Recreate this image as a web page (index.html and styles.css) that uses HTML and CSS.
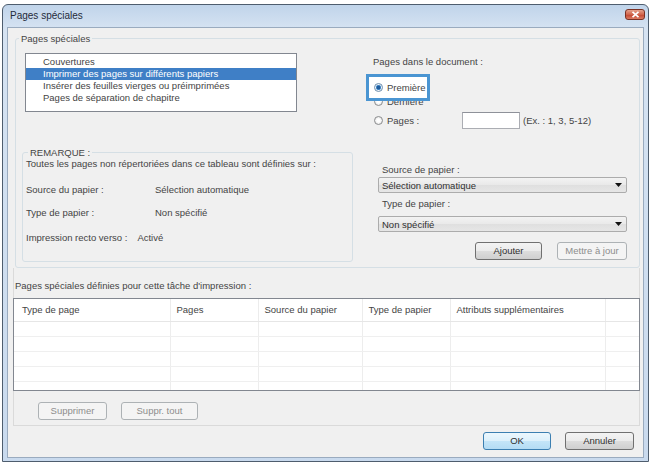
FILE: index.html
```html
<!DOCTYPE html>
<html lang="fr">
<head>
  <meta charset="UTF-8">
  <meta name="viewport" content="width=device-width, initial-scale=1.0">
  <title>Pages spéciales</title>
  <link rel="stylesheet" href="styles.css">
</head>
<body>

  <div class="window">
    <div class="titlebar">
      <span class="title">Pages spéciales</span>
      <span class="close">
        <svg width="9" height="7" viewBox="0 0 9 7"><path d="M1.5 0.8 L7.5 6.2 M7.5 0.8 L1.5 6.2" stroke="#fff" stroke-width="1.7"/></svg>
      </span>
    </div>

    <div class="client">
      <div class="group">
        <span class="group-title">Pages spéciales</span>

        <div class="group-top">
          <ul class="listbox">
            <li>Couvertures</li>
            <li class="selected">Imprimer des pages sur différents papiers</li>
            <li>Insérer des feuilles vierges ou préimprimées</li>
            <li>Pages de séparation de chapitre</li>
          </ul>

          <div class="doc-pages">
            <div class="doc-label">Pages dans le document :</div>
            <div class="focus-box"><span class="radio checked"></span>Première</div>
            <div class="radio-row last-row"><span class="radio"></span>Dernière</div>
            <div class="radio-row pages-row">
              <span class="radio"></span>
              <span class="pages-label">Pages :</span>
              <span class="textbox"></span>
              <span class="hint">(Ex. : 1, 3, 5-12)</span>
            </div>
          </div>
        </div>

        <div class="group-mid">
          <div class="note">
            <span class="group-title">REMARQUE :</span>
            <p class="note-intro">Toutes les pages non répertoriées dans ce tableau sont définies sur :</p>
            <div class="note-row"><span class="key">Source du papier :</span><span>Sélection automatique</span></div>
            <div class="note-row"><span class="key">Type de papier :</span><span>Non spécifié</span></div>
            <div class="note-row last-note"><span class="key key-auto">Impression recto verso :</span><span>Activé</span></div>
          </div>

          <div class="paper">
            <div class="paper-label">Source de papier :</div>
            <div class="combo">
              <span>Sélection automatique</span>
              <svg width="7" height="4" viewBox="0 0 7 4"><path d="M0 0 H7 L3.5 4 Z" fill="#111"/></svg>
            </div>
            <div class="paper-label second">Type de papier :</div>
            <div class="combo second">
              <span>Non spécifié</span>
              <svg width="7" height="4" viewBox="0 0 7 4"><path d="M0 0 H7 L3.5 4 Z" fill="#111"/></svg>
            </div>
            <div class="paper-actions">
              <span class="btn btn-add">Ajouter</span>
              <span class="btn btn-update disabled">Mettre à jour</span>
            </div>
          </div>
        </div>
      </div>

      <div class="defined">
        <div class="defined-title">Pages spéciales définies pour cette tâche d'impression :</div>
        <div class="table-wrap">
          <table class="pages-table">
            <colgroup>
              <col style="width:156px"><col style="width:88px"><col style="width:104px">
              <col style="width:88px"><col style="width:155px"><col style="width:34px">
            </colgroup>
            <tr><th>Type de page</th><th>Pages</th><th>Source du papier</th><th>Type de papier</th><th>Attributs supplémentaires</th><th></th></tr>
            <tr><td></td><td></td><td></td><td></td><td></td><td></td></tr>
            <tr><td></td><td></td><td></td><td></td><td></td><td></td></tr>
            <tr><td></td><td></td><td></td><td></td><td></td><td></td></tr>
            <tr><td></td><td></td><td></td><td></td><td></td><td></td></tr>
            <tr><td></td><td></td><td></td><td></td><td></td><td></td></tr>
          </table>
        </div>
        <div class="table-actions">
          <span class="btn disabled btn-del">Supprimer</span>
          <span class="btn disabled btn-delall">Suppr. tout</span>
        </div>
      </div>

      <div class="dialog-buttons">
        <span class="btn btn-default btn-ok">OK</span>
        <span class="btn btn-cancel">Annuler</span>
      </div>
    </div>
  </div>

</body>
</html>
```

FILE: styles.css
```css
* {
  box-sizing: border-box;
}
body {
  margin: 0;
  background-color: #fff;
  font-family: "Liberation Sans", Arial, sans-serif;
  font-size: 9.5px;
  color: #444;
}
p {
  margin: 0;
}

/* window frame */
.window {
  width: 647px;
  height: 458px;
  margin: 4px 0 0 2px;
  border: 1px solid #4e5d6e;
  border-radius: 6px 6px 0 0;
  background: linear-gradient(#c0d4ea, #d6e3f2 24px, #c9daee);
  display: flex;
  flex-direction: column;
}
.titlebar {
  height: 22px;
  flex-shrink: 0;
  display: flex;
  justify-content: space-between;
}
.title {
  padding-left: 7px;
  line-height: 22px;
  font-size: 10px;
  color: #1f2b3a;
}
.close {
  width: 20px;
  height: 11px;
  margin: 4px 3px 0 0;
  border: 1px solid #7a3124;
  border-radius: 3px;
  background: linear-gradient(#e6a28c, #d0644c 50%, #c2452f 51%, #dc7b62);
  display: flex;
  align-items: center;
  justify-content: center;
}
.client {
  height: 431px;
  margin: 0 4px 3px;
  border: 1px solid #9aabbf;
  background-color: #f0f0f0;
}

/* group boxes */
.group {
  width: 625px;
  height: 230px;
  margin: 10px 0 0 7px;
  border: 1px solid #d5dfe5;
  border-radius: 3px;
}
.group-title {
  display: block;
  width: max-content;
  margin: -6px 0 0 3px;
  padding: 0 2px;
  line-height: 11px;
  background-color: #f0f0f0;
}
.group-top {
  display: flex;
  height: 85px;
}
.listbox {
  list-style: none;
  width: 272px;
  height: 59px;
  margin: 9px 0 0 9px;
  padding: 2px 0 0;
  border: 1px solid #828790;
  background-color: #fff;
}
.listbox li {
  line-height: 12px;
  padding-left: 17px;
  white-space: nowrap;
}
.listbox .selected {
  background-color: #3f7fc6;
  color: #fff;
}

.doc-pages {
  margin-left: 69px;
}
.doc-label {
  margin-top: 12px;
  padding-left: 7px;
  line-height: 11px;
}
.focus-box {
  position: relative;
  z-index: 1;
  width: 64px;
  height: 27px;
  margin-top: 7px;
  padding-left: 5px;
  border: 3px solid #4a95d2;
  background-color: #fff;
  display: flex;
  align-items: center;
}
.radio-row {
  display: flex;
  align-items: center;
  padding-left: 8px;
  line-height: 11px;
}
.last-row {
  margin-top: -5px;
}
.pages-row {
  height: 17px;
  margin-top: 5px;
}
.radio {
  width: 9px;
  height: 9px;
  margin-right: 4px;
  flex-shrink: 0;
  border: 1px solid #8a8c8e;
  border-radius: 50%;
  background: radial-gradient(circle, #fff 30%, #d9d9d9);
}
.radio.checked {
  border-color: #6f8fae;
  background: radial-gradient(circle, #1e5b9c 0 1.6px, #5fa3dc 2.4px, #eef3f8 3px);
}
.pages-label {
  width: 75px;
}
.textbox {
  width: 58px;
  height: 17px;
  border: 1px solid #abadb3;
  border-top-color: #8e9199;
  background-color: #fff;
}
.hint {
  margin-left: 3px;
}

.group-mid {
  display: flex;
  margin-top: 23px;
}
.note {
  width: 331px;
  height: 110px;
  margin-left: 6px;
  border: 1px solid #d5dfe5;
  border-radius: 3px;
}
.note .group-title {
  margin-left: 5px;
}
.note-intro {
  padding-left: 3px;
  line-height: 11px;
}
.note-row {
  display: flex;
  margin-top: 15px;
  padding-left: 3px;
  line-height: 11px;
}
.note-row + .note-row {
  margin-top: 12px;
}
.note-row.last-note {
  margin-top: 14px;
}
.key {
  width: 129px;
}
.key-auto {
  width: auto;
  margin-right: 10px;
}

.paper {
  width: 249px;
  margin-left: 25px;
}
.paper-label {
  margin-top: 12px;
  padding-left: 4px;
  line-height: 11px;
}
.paper-label.second {
  margin-top: 5px;
}
.combo {
  height: 16px;
  margin-top: 2px;
  padding: 0 4px 0 3px;
  border: 1px solid #acacac;
  border-radius: 2px;
  background: linear-gradient(#f3f3f3, #e9e9e9 50%, #dfdfdf 51%, #e6e6e6);
  display: flex;
  align-items: center;
  justify-content: space-between;
  color: #303030;
}
.combo.second {
  margin-top: 7px;
}
.paper-actions {
  display: flex;
  justify-content: flex-end;
  gap: 15px;
  margin-top: 10px;
}

/* buttons */
.btn {
  display: block;
  height: 18px;
  line-height: 16px;
  text-align: center;
  border: 1px solid #707070;
  border-radius: 3px;
  background: linear-gradient(#f3f3f3, #ebebeb 50%, #dddddd 51%, #cfcfcf);
  color: #303030;
}
.btn.disabled {
  border-color: #adb2b5;
  background: #f4f4f4;
  color: #8d8d8d;
}
.btn-default {
  border-color: #3c7fb1;
  background: linear-gradient(#ecf7fd, #dcf0fb 50%, #c4e5f8 51%, #b4dcf4);
}
.btn-add { width: 67px; }
.btn-update { width: 70px; }
.btn-del { width: 69px; }
.btn-delall { width: 77px; }
.btn-ok { width: 68px; }
.btn-cancel { width: 69px; }

/* defined pages */
.defined {
  width: 627px;
  margin-left: 5px;
  padding-top: 12px;
  border: 1px solid #dadada;
  border-top: none;
}
.defined-title {
  padding-left: 1px;
  line-height: 11px;
}
.table-wrap {
  height: 93px;
  margin: 7px -1px 0;
  overflow: hidden;
  border: 1px solid #828790;
  background-color: #fff;
}
.pages-table {
  width: 625px;
  table-layout: fixed;
  border-collapse: collapse;
}
.pages-table th {
  height: 22px;
  padding: 0 0 0 6px;
  font-weight: normal;
  text-align: left;
  white-space: nowrap;
  border-right: 1px solid #ececec;
  border-bottom: 1px solid #e6e6e6;
}
.pages-table th:first-child {
  padding-left: 8px;
}
.pages-table td {
  height: 15px;
  padding: 0;
  border-right: 1px solid #ededed;
  border-bottom: 1px solid #efefef;
}
.table-actions {
  display: flex;
  gap: 14px;
  padding: 11px 0 5px 24px;
}
.dialog-buttons {
  display: flex;
  justify-content: flex-end;
  gap: 14px;
  margin-top: 6px;
  padding-right: 9px;
}
```
